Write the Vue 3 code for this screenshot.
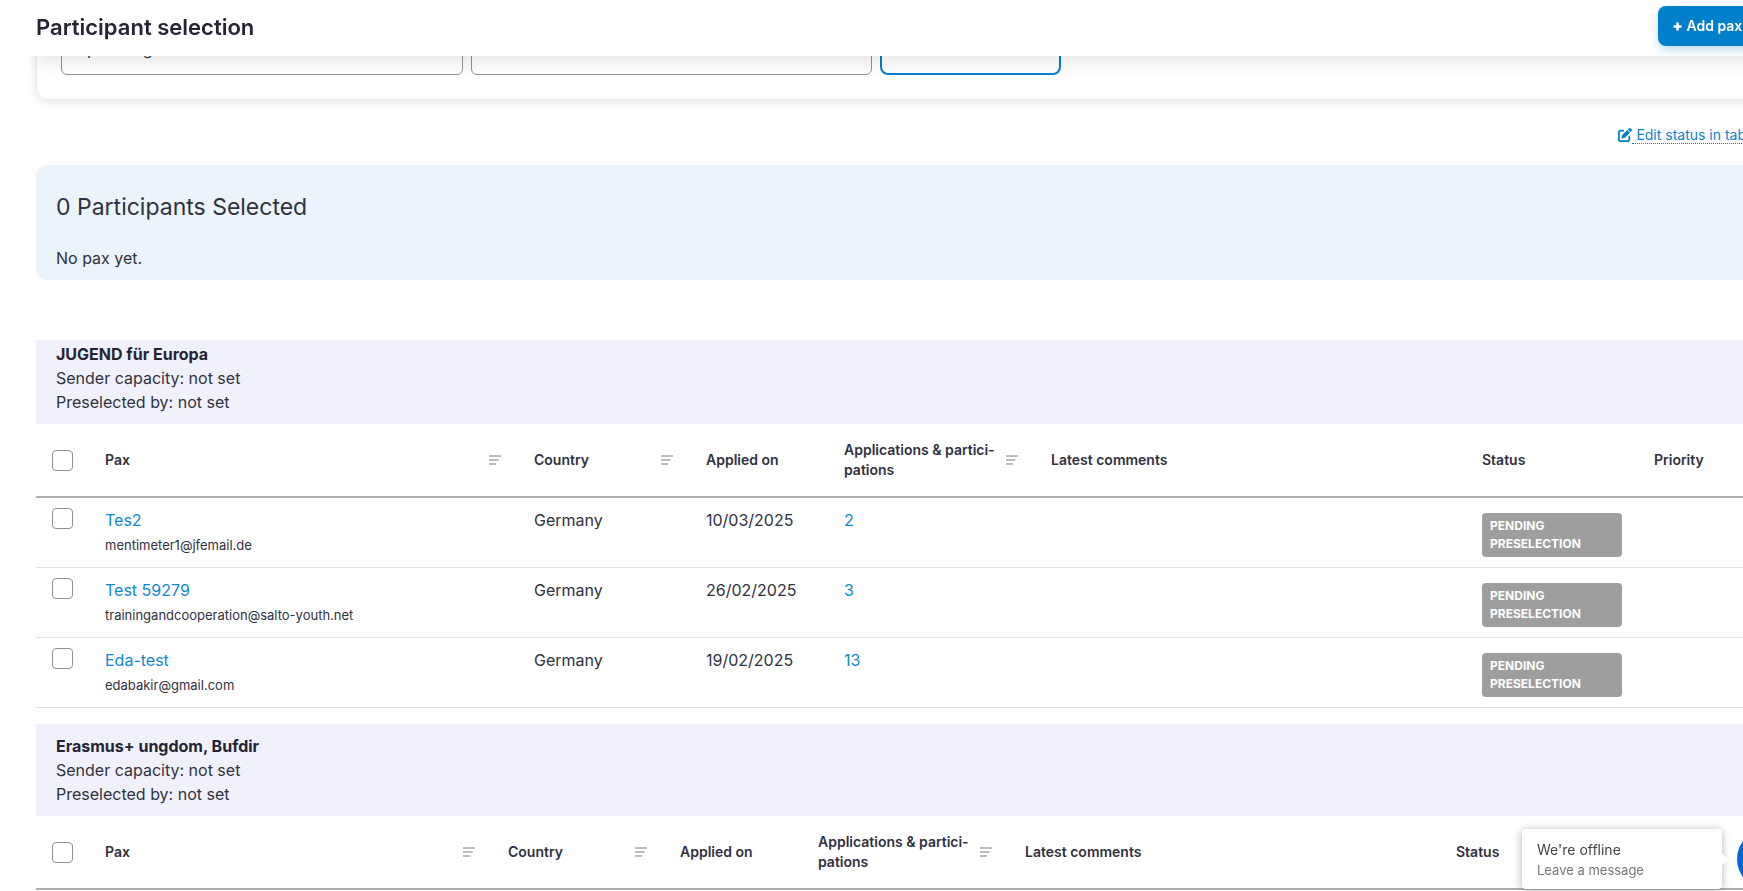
<script setup>
import { ref } from 'vue'

const groups = ref([
  {
    id: 'jfe',
    name: 'JUGEND für Europa',
    paxClass: 'col-pax',
    rows: [
      { name: 'Tes2', email: 'mentimeter1@jfemail.de', country: 'Germany', date: '10/03/2025', count: 2 },
      { name: 'Test 59279', email: 'trainingandcooperation@salto-youth.net', country: 'Germany', date: '26/02/2025', count: 3 },
      { name: 'Eda-test', email: 'edabakir@gmail.com', country: 'Germany', date: '19/02/2025', count: 13 },
    ],
  },
  { id: 'bufdir', name: 'Erasmus+ ungdom, Bufdir', paxClass: 'col-pax-narrow', rows: [] },
])

const headers = [
  { label: 'Pax', sortable: true },
  { label: 'Country', sortable: true },
  { label: 'Applied on', sortable: false },
  { label: 'Applications & partici\u00ADpations', sortable: true },
  { label: 'Latest comments', sortable: false },
  { label: 'Status', sortable: false },
  { label: 'Priority', sortable: false },
]
</script>

<template>
  <div class="page">
    <header class="topbar">
      <h1>Participant selection</h1>
      <button type="button" class="add">
        <svg width="9" height="9" viewBox="0 0 9 9" aria-hidden="true"><path d="M4.5 .5v8M.5 4.5h8" /></svg>
        Add pax
      </button>
    </header>

    <main>
      <form class="filters" @submit.prevent>
        <select aria-label="Activities"><option>Upcoming activities</option></select>
        <select aria-label="Scope" class="scope"><option>See</option></select>
        <button type="submit" aria-label="Filter"></button>
      </form>

      <div class="tools">
        <a href="#">
          <svg width="14" height="14" viewBox="0 0 512 512" aria-hidden="true">
            <path d="M471.6 21.7c-21.9-21.9-57.300-21.900-79.200 0L362.300 51.700l97.900 97.900 30.100-30.100c21.900-21.900 21.900-57.300 0-79.200L471.600 21.700zM172.400 241.700c-6.100 6.100-10.800 13.600-13.500 21.900l-29.600 88.800c-2.900 8.600-.6 18.100 5.800 24.600s15.900 8.700 24.600 5.800l88.800-29.600c8.200-2.700 15.700-7.400 21.900-13.500L437.700 172.300 339.700 74.300 172.400 241.700zM96 64C43 64 0 107 0 160V416c0 53 43 96 96 96H352c53 0 96-43 96-96V320c0-17.700-14.300-32-32-32s-32 14.300-32 32v96c0 17.700-14.300 32-32 32H96c-17.700 0-32-14.300-32-32V160c0-17.700 14.300-32 32-32h96c17.700 0 32-14.300 32-32s-14.300-32-32-32H96z" />
          </svg><span>&nbsp;Edit status in table</span>
        </a>
      </div>

      <section class="selected">
        <h2>0 Participants Selected</h2>
        <p>No pax yet.</p>
      </section>

      <section v-for="g in groups" :key="g.id" class="group">
        <div class="summary">
          <strong>{{ g.name }}</strong>
          <span>Sender capacity: not set</span>
          <span>Preselected by: not set</span>
        </div>
        <table>
          <colgroup>
            <col class="col-check" />
            <col :class="g.paxClass" />
            <col class="col-country" />
            <col class="col-date" />
            <col class="col-apps" />
            <col class="col-comments" />
            <col class="col-status" />
            <col />
          </colgroup>
          <thead>
            <tr>
              <th class="check"><input type="checkbox" aria-label="Select all" /></th>
              <th v-for="h in headers" :key="h.label" scope="col">
                <div class="head">
                  <span>{{ h.label }}</span>
                  <svg v-if="h.sortable" width="12" height="10" viewBox="0 0 12 10" aria-hidden="true">
                    <path d="M0 1h12M0 5h9.500M0 9h7" />
                  </svg>
                </div>
              </th>
            </tr>
          </thead>
          <tbody>
            <tr v-for="r in g.rows" :key="r.email">
              <td class="check"><input type="checkbox" :aria-label="'Select ' + r.name" /></td>
              <td><a href="#">{{ r.name }}</a><small>{{ r.email }}</small></td>
              <td>{{ r.country }}</td>
              <td>{{ r.date }}</td>
              <td><a href="#">{{ r.count }}</a></td>
              <td></td>
              <td class="status"><span class="badge">PENDING PRESELECTION</span></td>
              <td></td>
            </tr>
          </tbody>
        </table>
      </section>
    </main>

    <aside class="chat">
      <div class="bubble">
        <strong>We're offline</strong>
        <span>Leave a message</span>
      </div>
      <button type="button" aria-label="Open chat"></button>
    </aside>
  </div>
</template>

<style>
body {
  overflow: hidden;
}
</style>

<style scoped>
.page {
  height: 100vh;
  overflow: hidden;
  background: #fff;
  color: #303141;
  font: 16px/24px Inter, "Liberation Sans", sans-serif;
}
.page *,
.page *::before {
  box-sizing: border-box;
}
button,
select,
input {
  margin: 0;
  font: inherit;
}
.topbar {
  position: fixed;
  inset: 0 -8vw auto 0;
  z-index: 2;
  display: flex;
  align-items: center;
  justify-content: space-between;
  height: 56px;
  padding: 0 36px;
  background: #fff;
  box-shadow: 36px 4px 20px rgba(0, 0, 0, 0.12);
}
.topbar h1 {
  margin: 0;
  padding-bottom: 3px;
  color: #232434;
  font-size: 22px;
  line-height: 32px;
  font-weight: 600;
}
.add {
  align-self: flex-start;
  display: flex;
  align-items: center;
  gap: 4px;
  width: 188px;
  height: 40px;
  margin-top: 6px;
  padding: 0 15px;
  border: 0;
  border-radius: 8px;
  background: #007fcb;
  color: #fff;
  font-size: 14px;
  font-weight: 600;
  box-shadow: 0 4px 10px rgba(0, 127, 203, 0.25);
}
.add svg {
  fill: none;
  stroke: #fff;
  stroke-width: 2.5;
}
main {
  width: 108vw;
  padding: 0 36px;
}
.filters {
  display: flex;
  gap: 8px;
  height: 99px;
  padding: 23px 24px 24px;
  border: 1px solid #ececf0;
  border-width: 0 1px;
  border-radius: 0 0 12px 12px;
  box-shadow: 0 3px 10px rgba(41, 42, 80, 0.12);
}
.filters select {
  width: 402px;
  height: 52px;
  padding: 0 13px;
  border: 1px solid #8f8f9d;
  border-radius: 6px;
  background: transparent;
  color: inherit;
  appearance: none;
}
.filters .scope {
  width: 401px;
}
.filters button {
  width: 181px;
  height: 52px;
  border: 2px solid #007fcb;
  border-radius: 8px;
  background: transparent;
}
.tools {
  display: flex;
  justify-content: flex-end;
  padding: 27px 0 21px;
}
.tools a {
  display: flex;
  align-items: center;
  width: 228px;
  color: #0a84cf;
  font-size: 14px;
  text-decoration: none;
}
.tools svg {
  fill: #007fcb;
}
.tools span {
  line-height: 17px;
  border-bottom: 1px dotted #007fcb;
}
.selected {
  margin-bottom: 60px;
  padding: 25px 20px 10px;
  border-radius: 10px;
  background: #ebf4fb;
}
.selected h2 {
  margin: 0 0 22px;
  font-size: 23px;
  line-height: 34px;
  font-weight: 400;
}
.selected p {
  margin: 0;
}
.summary {
  display: flex;
  flex-direction: column;
  padding: 10px 20px;
  background: #f1f1fb;
}
.summary strong {
  color: #232434;
  font-weight: 700;
}
.selected + .group .summary {
  padding-top: 2px;
}
.group {
  margin-bottom: 16px;
}
table {
  width: 100%;
  table-layout: fixed;
  border-collapse: separate;
  border-spacing: 0;
}
.col-check {
  width: 53px;
}
.col-pax {
  width: 429px;
}
.col-pax-narrow {
  width: 403px;
}
.col-country,
.col-status {
  width: 172px;
}
.col-date {
  width: 138px;
}
.col-apps {
  width: 207px;
}
.col-comments {
  width: 431px;
}
th {
  height: 74px;
  padding: 0 17px 0 16px;
  border-bottom: 2px solid #b0b0b0;
  font-size: 14px;
  line-height: 20px;
  font-weight: 600;
  text-align: left;
}
.head {
  display: flex;
  align-items: center;
  justify-content: space-between;
}
.head svg {
  flex: none;
  fill: none;
  stroke: #bcbcbf;
  stroke-width: 2;
}
td {
  height: 70px;
  padding: 10px 16px 0;
  border-bottom: 1px solid #e1e1e1;
  vertical-align: top;
}
td a {
  color: #0f88d2;
  text-decoration: none;
}
td small {
  display: block;
  margin-top: 1px;
  font-size: 13px;
}
.check input {
  display: block;
  width: 21px;
  height: 21px;
  border: 1px solid #8f8f9d;
  border-radius: 4px;
  background: #fff;
  appearance: none;
}
td.status {
  padding-top: 15px;
}
.badge {
  display: block;
  padding: 4px 8px;
  border-radius: 4px;
  background: #9e9e9e;
  color: #fff;
  font-size: 12px;
  line-height: 18px;
  font-weight: 700;
}
.chat {
  position: fixed;
  right: -54px;
  bottom: 2px;
  z-index: 3;
  display: flex;
  align-items: center;
  gap: 15px;
}
.bubble {
  position: relative;
  display: flex;
  flex-direction: column;
  justify-content: center;
  width: 200px;
  height: 60px;
  padding: 2px 15px 0;
  border-radius: 4px;
  background: #fff;
  box-shadow: 0 1px 8px rgba(0, 0, 0, 0.3);
  color: #444;
  font-size: 14px;
  line-height: 20px;
}
.bubble::before {
  content: "";
  position: absolute;
  top: 26px;
  right: -4px;
  width: 9px;
  height: 9px;
  background: #fff;
  transform: rotate(45deg);
}
.bubble strong {
  font-weight: 400;
}
.bubble span {
  color: #777;
  font-size: 13px;
}
.chat button {
  width: 60px;
  height: 60px;
  border: 0;
  border-radius: 50%;
  background: #0566d0;
}
</style>
